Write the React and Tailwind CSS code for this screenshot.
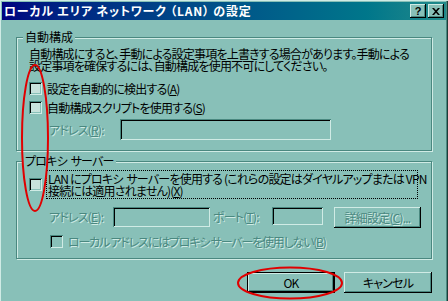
const sunken =
  "shadow-[inset_1px_1px_0_#4a8880,inset_-1px_-1px_0_#d0ebe5,inset_2px_2px_0_#000,inset_-2px_-2px_0_#88c0b8]";
const raised =
  "shadow-[inset_-1px_-1px_0_#000,inset_1px_1px_0_#d0ebe5,inset_-2px_-2px_0_#4a8880]";
const disabled = "text-[#4a8880] [text-shadow:1px_1px_0_#d0ebe5]";

const Check = ({ off }) => (
  <div className={`h-[13px] w-[13px] shrink-0 ${sunken} ${off ? "bg-[#88c0b8]" : "bg-[#c8e2dc]"}`} />
);

const Field = ({ className }) => <div className={`shrink-0 bg-[#88c0b8] ${sunken} ${className}`} />;

const TitleBtn = ({ children }) => (
  <div className={`flex h-[14px] w-[16px] items-center justify-center bg-[#88c0b8] ${raised}`}>{children}</div>
);

export default function App() {
  return (
    <div className="relative h-[301px] w-[448px] overflow-hidden bg-[#88c0b8] p-[2px] font-['Noto_Sans_CJK_JP',sans-serif] text-[12px] leading-[12px] tracking-[-0.8px] text-black [font-feature-settings:'palt'] shadow-[inset_1px_1px_0_#d0ebe5,inset_-1px_0_0_#1e3c38,inset_-2px_0_0_#4a8880]">
      {/* title bar */}
      <div className="flex h-[18px] items-center justify-between bg-gradient-to-r from-[#000080] to-[#1f8a8a] pl-[2px] pr-[2px]">
        <span className="whitespace-nowrap font-bold tracking-[0.8px] text-white">ローカル エリア ネットワーク （LAN） の設定</span>
        <div className="flex gap-[2px] tracking-normal">
          <TitleBtn>
            <span className="font-['Liberation_Sans',sans-serif] text-[11px] font-bold leading-none">?</span>
          </TitleBtn>
          <TitleBtn>
            <svg width="8" height="7" viewBox="0 0 8 7">
              <path d="M0 0h2l2 2.2L6 0h2L5 3.5 8 7H6L4 4.8 2 7H0l3-3.5z" fill="#000" />
            </svg>
          </TitleBtn>
        </div>
      </div>

      {/* 自動構成 */}
      <fieldset className="mx-[14px] mt-[11px] h-[120px] border border-[#4a8880] shadow-[inset_1px_1px_0_#d0ebe5,1px_1px_0_#d0ebe5]">
        <legend className="ml-[6px] bg-[#88c0b8] px-[2px] tracking-normal">自動構成</legend>
        <div className="pl-[12px] pt-[5px]">
          <p className="whitespace-nowrap">
            自動構成にすると、手動による設定事項を上書きする場合があります。手動による
            <br />
            設定事項を確保するには、自動構成を使用不可にしてください。
          </p>
          <div className="mt-[10px] flex items-center gap-[5px]">
            <Check />
            <span>設定を自動的に検出する(<u>A</u>)</span>
          </div>
          <div className="mt-[6px] flex items-center gap-[5px]">
            <Check />
            <span>自動構成スクリプトを使用する(<u>S</u>)</span>
          </div>
          <div className="mt-[5px] flex items-center">
            <span className={`w-[91px] pl-[20px] ${disabled}`}>
              アドレス(<u>R</u>):
            </span>
            <Field className="h-[21px] w-[211px]" />
          </div>
        </div>
      </fieldset>

      {/* プロキシ サーバー */}
      <fieldset className="mx-[14px] mt-[4px] h-[104px] border border-[#4a8880] shadow-[inset_1px_1px_0_#d0ebe5,1px_1px_0_#d0ebe5]">
        <legend className="ml-[6px] bg-[#88c0b8] px-[2px]">プロキシ&nbsp; サーバー</legend>
        <div className="pl-[12px] pt-[3px]">
          <div className="flex items-center gap-[4px]">
            <Check />
            <div className="w-[372px] whitespace-nowrap border border-dotted border-black px-[1px] pb-[1px] pt-[2px]">
              LAN にプロキシ&nbsp; サーバーを使用する (これらの設定はダイヤルアップまたは VPN
              <br />
              接続には適用されません)(<u>X</u>)
            </div>
          </div>
          <div className="mt-[8px] flex items-start">
            <span className={`w-[84px] pl-[20px] pt-[4px] ${disabled}`}>
              アドレス(<u>E</u>):
            </span>
            <Field className="h-[20px] w-[97px]" />
            <span className={`w-[62px] pl-[3px] pt-[4px] ${disabled}`}>
              ポート(<u>T</u>):
            </span>
            <Field className="h-[18px] w-[51px]" />
            <div className={`ml-[11px] flex h-[21px] w-[87px] items-center justify-center bg-[#88c0b8] ${raised} ${disabled}`}>
              詳細設定(<u>C</u>)...
            </div>
          </div>
          <div className="mt-[7px] flex items-center gap-[5px] pl-[21px]">
            <Check off />
            <span className={`tracking-[-1.2px] ${disabled}`}>
              ローカル アドレスにはプロキシ サーバーを使用しない(<u>B</u>)
            </span>
          </div>
        </div>
      </fieldset>

      {/* buttons */}
      <div className="mr-[14px] mt-[13px] flex justify-end gap-[9px]">
        <div className="h-[21px] w-[88px] border border-black">
          <div className={`flex h-full w-full items-center justify-center bg-[#88c0b8] ${raised}`}>OK</div>
        </div>
        <div className={`flex h-[21px] w-[88px] items-center justify-center bg-[#88c0b8] ${raised}`}>キャンセル</div>
      </div>

      {/* red annotations */}
      <svg className="pointer-events-none absolute left-0 top-0" width="448" height="301">
        <ellipse cx="35" cy="138" rx="13" ry="73" fill="none" stroke="#e00000" strokeWidth="2" />
        <ellipse cx="290" cy="283" rx="52" ry="15.5" fill="none" stroke="#e00000" strokeWidth="2" />
      </svg>
    </div>
  );
}
